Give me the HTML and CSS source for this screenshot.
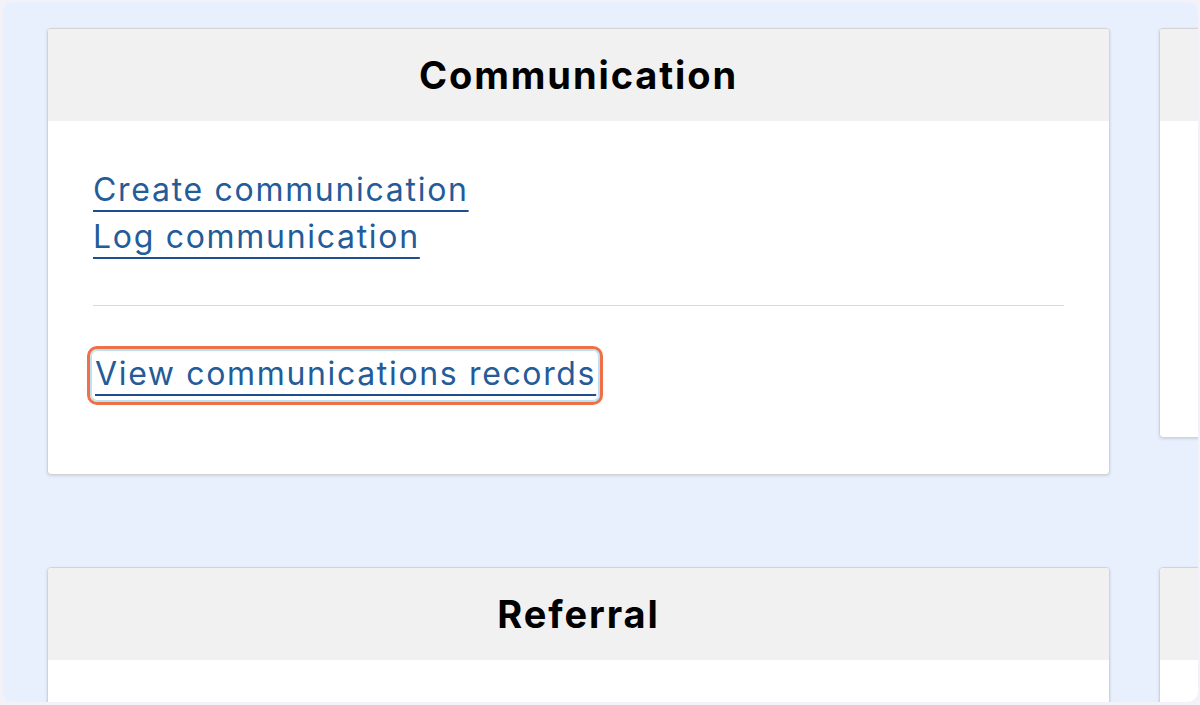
FILE: index.html
```html
<!DOCTYPE html>
<html lang="en">
<head>
<meta charset="utf-8">
<title>Communication</title>
<link rel="stylesheet" href="styles.css">
</head>
<body>
<div class="frame">
  <div class="grid">
    <section class="card card-main">
      <header class="card-head">Communication</header>
      <div class="card-body">
        <div class="links">
          <a href="#" class="link">Create communication</a>
          <a href="#" class="link">Log communication</a>
        </div>
        <hr class="divider">
        <div class="links">
          <a href="#" class="link focused">View communications records</a>
        </div>
      </div>
    </section>
    <section class="card card-side">
      <header class="card-head"></header>
      <div class="card-body side-body"></div>
    </section>
    <section class="card card-main card-bottom">
      <header class="card-head">Referral</header>
      <div class="card-body"></div>
    </section>
    <section class="card card-side card-bottom">
      <header class="card-head"></header>
      <div class="card-body"></div>
    </section>
  </div>
</div>
</body>
</html>
```

FILE: styles.css
```css
html, body {
  margin: 0;
  padding: 0;
  height: 100%;
  overflow: hidden;
}
body {
  background: #f2f2f8;
  font-family: Inter, "Noto Sans", "Liberation Sans", sans-serif;
}
.frame {
  margin: 2px 2px 3px 3px;
  height: 700px;
  border-radius: 10px;
  background: #e9f0fd;
  overflow: hidden;
  box-sizing: border-box;
  padding: 26px 0 0 44px;
}
.grid {
  display: grid;
  grid-template-columns: 1063px 200px;
  column-gap: 49px;
  row-gap: 92px;
  align-items: start;
}
.card {
  background: #fff;
  border: 1px solid #d3d3d3;
  border-radius: 4px;
  box-shadow: 0 1px 3px rgba(0, 0, 0, 0.12);
  overflow: hidden;
}
.card-head {
  height: 91px;
  background: #f1f1f1;
  display: flex;
  align-items: center;
  justify-content: center;
  font-size: 38px;
  font-weight: 700;
  letter-spacing: 1.9px;
  color: #000;
  padding-bottom: 1px;
}
.card-body {
  padding: 45px 45px 73px 45px;
}
.side-body {
  height: 198px;
}
.card-bottom .card-body {
  height: 200px;
}
.links {
  display: flex;
  flex-direction: column;
  align-items: flex-start;
}
.link {
  font-size: 32px;
  line-height: 47px;
  letter-spacing: 1.7px;
  color: #245b99;
  text-decoration: underline;
  text-decoration-thickness: 2px;
  text-underline-offset: 9px;
  text-decoration-color: #1d4f8c;
}
.divider {
  border: 0;
  border-top: 1px solid #d9d9d9;
  margin: 45px 0 44px 0;
}
.focused {
  letter-spacing: 1.65px;
  border-radius: 6px;
  outline: 3px solid #f26e45;
  outline-offset: 1px;
  box-shadow: 0 0 0 1px #b9e2f5, inset 0 0 0 1px #b9e2f5;
  padding: 0 3px 4px 4px;
  margin-left: -2px;
}
```
